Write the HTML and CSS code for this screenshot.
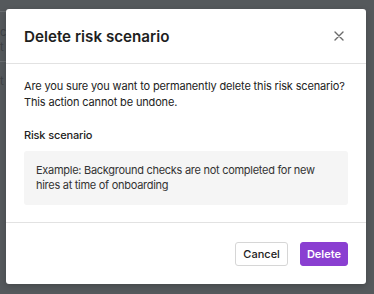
FILE: index.html
```html
<!DOCTYPE html>
<html>
<head>
<meta charset="utf-8">
<link rel="stylesheet" href="styles.css">
</head>
<body>
<div class="backdrop">
  <div class="behind">
    <div class="behind-line one"></div>
    <div class="behind-text">c<br>t</div>
    <div class="behind-line two"></div>
    <div class="behind-text t2">t</div>
  </div>
  <div class="modal">
    <div class="header">
      <h2 class="title">Delete risk scenario</h2>
      <button class="close" aria-label="Close">
        <svg width="10" height="10" viewBox="0 0 10 10"><path d="M1 1L9 9M9 1L1 9" stroke="#6b6b6b" stroke-width="1.4" stroke-linecap="round"/></svg>
      </button>
    </div>
    <div class="body">
      <p class="message">Are you sure you want to permanently delete this risk scenario?<br>This action cannot be undone.</p>
      <div class="label">Risk scenario</div>
      <div class="scenario">Example: Background checks are not completed for new<br>hires at time of onboarding</div>
    </div>
    <div class="footer">
      <button class="btn cancel">Cancel</button>
      <button class="btn delete">Delete</button>
    </div>
  </div>
</div>
</body>
</html>
```
FILE: styles.css
```css
* { box-sizing: border-box; }
html, body { margin: 0; padding: 0; }
body {
  width: 374px;
  height: 294px;
  overflow: hidden;
  font-family: Inter, "Noto Sans", sans-serif;
  background: #55595c;
}
.backdrop {
  position: relative;
  width: 374px;
  height: 294px;
  background: #55595c;
  padding: 9px 8px 10px 6px;
}
.behind {
  position: absolute;
  left: 0;
  top: 0;
  width: 20px;
  height: 100%;
}
.behind-line {
  position: absolute;
  left: 0;
  width: 6px;
  height: 1px;
  background: #6a6e71;
}
.behind-line.one { top: 11px; }
.behind-line.two { top: 61px; }
.behind-text {
  position: absolute;
  left: 0;
  top: 25px;
  color: #3e4245;
  font-size: 11px;
  line-height: 15px;
}
.behind-text.t2 { top: 74px; }
.modal {
  position: relative;
  width: 360px;
  height: 275px;
  background: #fff;
  border-radius: 3px;
  display: flex;
  flex-direction: column;
  box-shadow: 0 2px 6px rgba(0,0,0,0.2);
}
.header {
  height: 55px;
  display: flex;
  align-items: center;
  justify-content: space-between;
  padding: 0 22px 0 18px;
  border-bottom: 1px solid #e2e2e2;
}
.title {
  margin: 0;
  font-size: 15.2px;
  font-weight: 600;
  color: #1e1e1e;
}
.close {
  border: 0;
  background: none;
  padding: 0;
  width: 10px;
  height: 10px;
  display: flex;
  align-items: center;
  justify-content: center;
}
.body {
  padding: 14px 18px 17px 18px;
  border-bottom: 1px solid #e2e2e2;
}
.message {
  margin: 0;
  font-size: 11px;
  letter-spacing: -0.15px;
  line-height: 16px;
  color: #222;
  white-space: nowrap;
}
.label {
  margin-top: 17px;
  font-size: 11px;
  letter-spacing: -0.15px;
  line-height: 16px;
  font-weight: 500;
  color: #222;
}
.scenario {
  margin-top: 8px;
  background: #f5f5f5;
  border-radius: 3px;
  padding: 12px 12px 12px 12px;
  font-size: 11px;
  letter-spacing: -0.28px;
  line-height: 15px;
  color: #333;
  white-space: nowrap;
}
.footer {
  flex: 1;
  display: flex;
  align-items: center;
  justify-content: flex-end;
  gap: 12px;
  padding: 0 18px 0 18px;
}
.btn {
  font-family: Inter, "Noto Sans", sans-serif;
  font-size: 11px;
  height: 24px;
  border-radius: 3px;
  cursor: pointer;
}
.cancel {
  padding: 0 7px;
  background: #fff;
  border: 1px solid #d6d6d6;
  color: #222;
  font-weight: 500;
}
.delete {
  padding: 0 6px;
  background: #8a3fd1;
  border: 1px solid #8a3fd1;
  color: #fff;
  font-weight: 600;
}
```
